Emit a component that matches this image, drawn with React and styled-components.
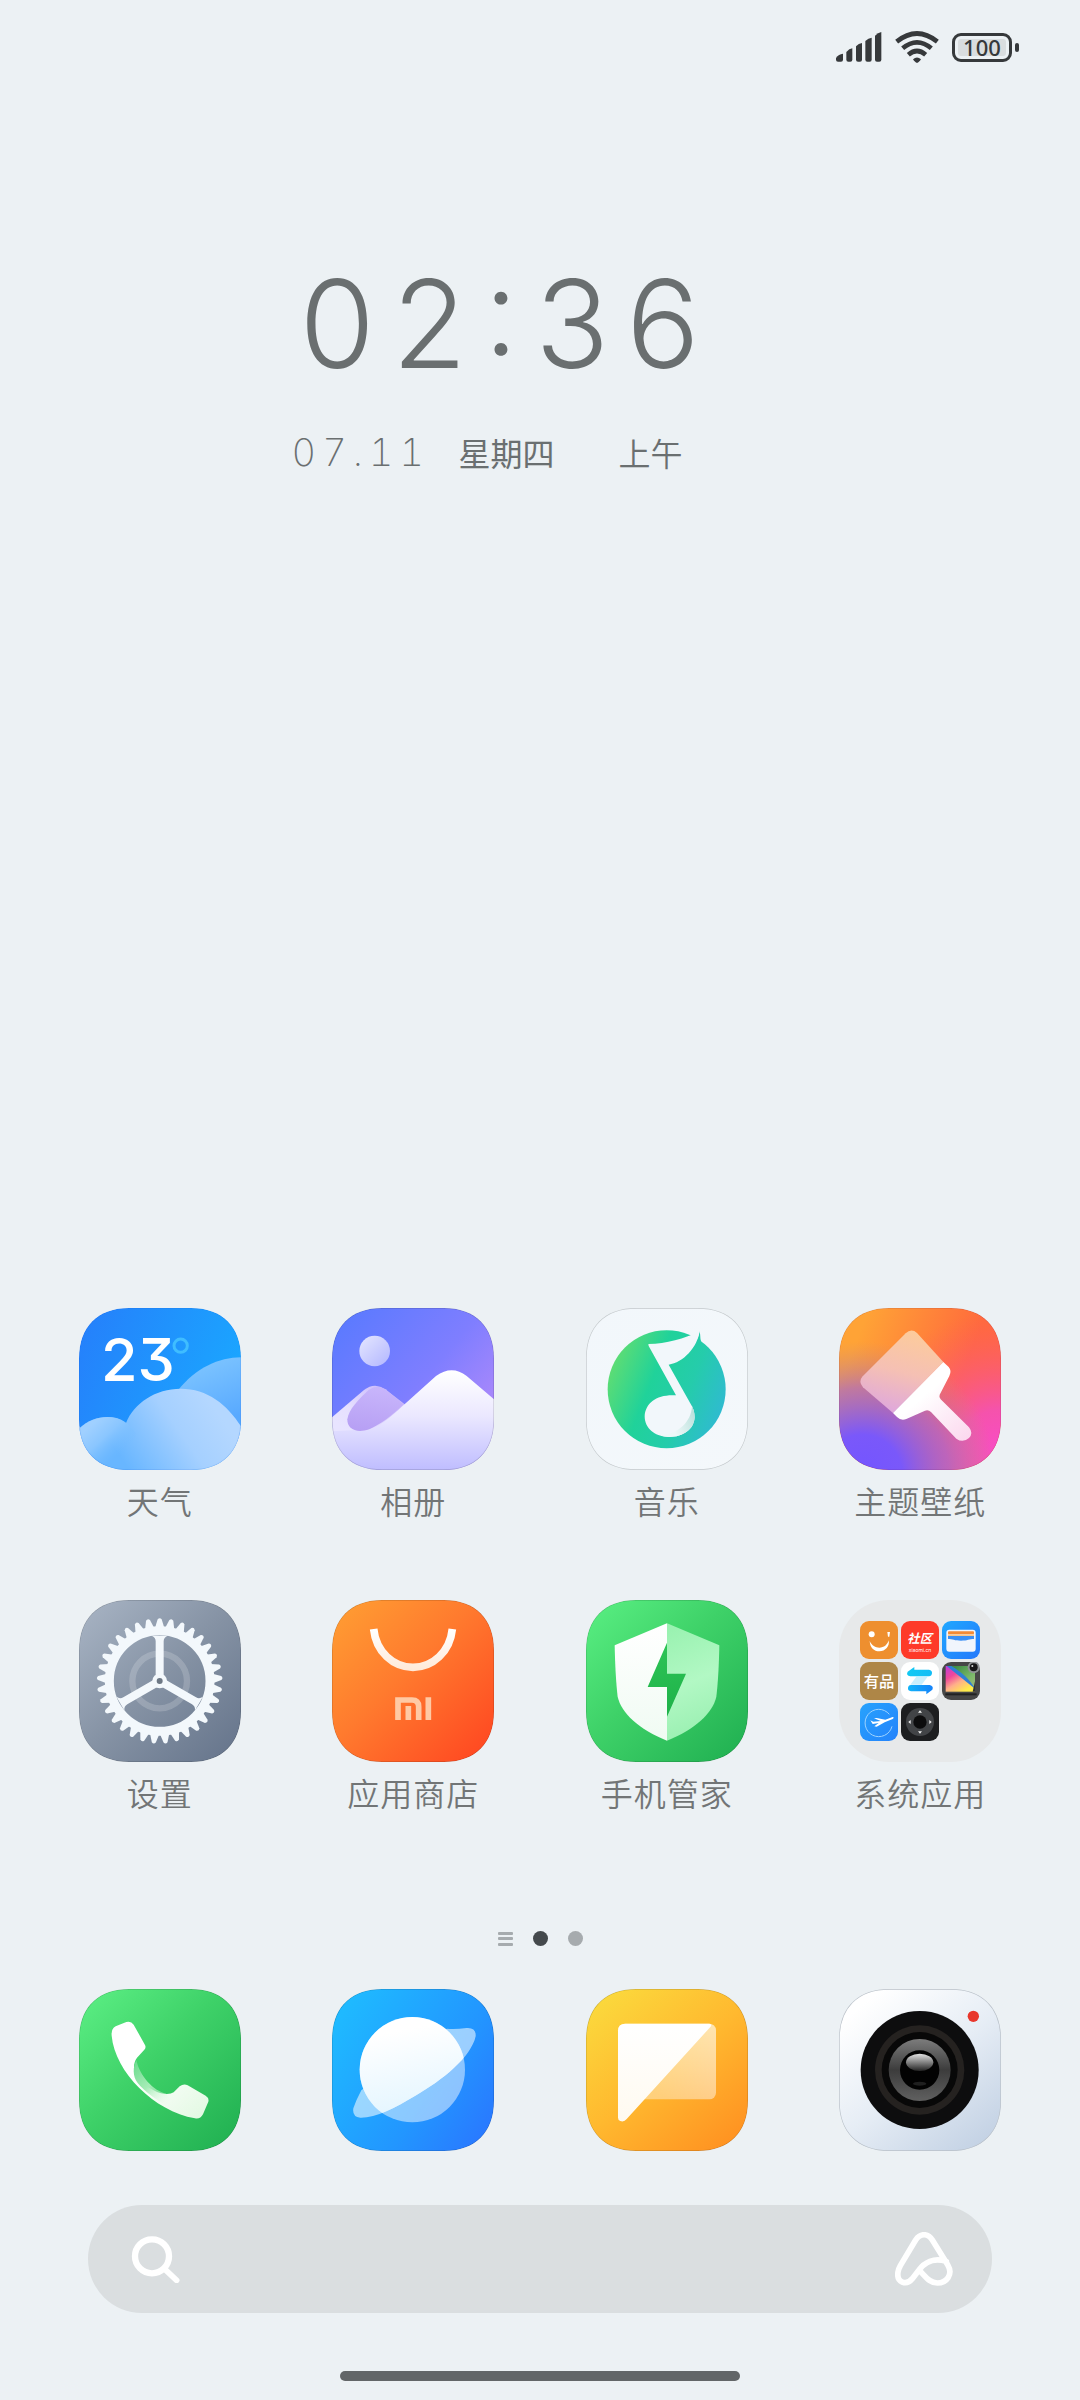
import styled, { createGlobalStyle } from 'styled-components'

const GlobalStyle = createGlobalStyle`
  * {
    box-sizing: border-box;
  }

  body {
    margin: 0;
    background: #ecf1f4;
    font-family: 'Inter', 'Noto Sans CJK SC', sans-serif;
  }

  button {
    padding: 0;
    border: 0;
    background: none;
    font: inherit;
    color: inherit;
    cursor: pointer;
  }

  svg {
    display: block;
  }
`

const Screen = styled.main`
  min-height: 100vh;
  display: flex;
  flex-direction: column;
  background: #ecf1f4;
`

const StatusBar = styled.header`
  display: flex;
  align-items: center;
  justify-content: flex-end;
  height: 94px;
  padding: 0 61px 0 0;
  gap: 13px;
  color: #36393b;
`

const Battery = styled.div`
  display: flex;
  align-items: center;
  gap: 3px;

  &::after {
    content: '';
    width: 4px;
    height: 9px;
    border-radius: 2px;
    background: #36393b;
  }
`

const BatteryBody = styled.div`
  width: 60px;
  height: 29px;
  padding: 3px;
  border: 3px solid #36393b;
  border-radius: 9px;
`

const BatteryLevel = styled.div`
  height: 17px;
  border-radius: 3px;
  background: #d9dddf;
  color: #36393b;
  font-family: 'Noto Sans', sans-serif;
  font-size: 22px;
  font-weight: 500;
  line-height: 17px;
  text-align: center;
`

const ClockWidget = styled.section`
  display: flex;
  flex-direction: column;
  gap: 44px;
  margin-top: 170px;
  padding-left: 27%;
  color: #6a6f70;
`

const Time = styled.time`
  padding-left: 8px;
  font-size: 122px;
  font-weight: 300;
  font-feature-settings: 'case';
  line-height: 120px;
  letter-spacing: 17px;
`

const DateLine = styled.div`
  display: flex;
  align-items: center;
  height: 48px;
  font-size: 32px;
  line-height: 48px;
`

const Day = styled.time`
  width: 167px;
  font-size: 38px;
  font-weight: 200;
  font-variant-numeric: tabular-nums;
  letter-spacing: 6px;
`

const Weekday = styled.span`
  width: 160px;
  font-family: 'Noto Sans CJK SC', sans-serif;
`

const Period = styled.span`
  font-family: 'Noto Sans CJK SC', sans-serif;
  font-weight: 350;
`

const Grid = styled.nav`
  display: grid;
  grid-template-columns: repeat(4, 1fr);
  row-gap: 76px;
  padding: 0 33px;
  margin-top: ${({ $push }) => $push};
`

const App = styled.button`
  display: flex;
  flex-direction: column;
  align-items: center;
  gap: 6px;
`

const Label = styled.span`
  color: #727576;
  font-family: 'Noto Sans CJK SC', sans-serif;
  font-size: 32px;
  font-weight: 350;
  line-height: 48px;
  letter-spacing: 1px;
`

const Folder = styled.span`
  display: grid;
  grid-template-columns: repeat(3, 38px);
  grid-auto-rows: 38px;
  gap: 3px;
  width: 162px;
  height: 162px;
  padding: 21px;
  border-radius: 50px;
  background: #e7e9ea;
`

const Pager = styled.div`
  display: flex;
  align-items: center;
  justify-content: center;
  gap: 20px;
  margin: 115px 0 43px;
`

const Dot = styled.button`
  width: 15px;
  height: 15px;
  border-radius: 50%;
  background: ${({ $active }) => ($active ? '#44494c' : '#a6abae')};
`

const FeedMark = styled.button`
  display: flex;
  flex-direction: column;
  justify-content: space-between;
  width: 15px;
  height: 14px;

  span {
    height: 3px;
    border-radius: 1px;
    background: #a6abae;
  }
`

const SearchBar = styled.form`
  display: flex;
  align-items: center;
  height: 108px;
  margin: 54px 88px 0;
  padding: 0 39px 0 43px;
  border-radius: 54px;
  background: #dadee0;
`

const SearchInput = styled.input`
  flex: 1;
  min-width: 0;
  height: 60px;
  margin: 0 20px;
  border: 0;
  outline: 0;
  background: none;
  color: #44494c;
  font: 32px 'Noto Sans CJK SC', sans-serif;
`

const HomeBar = styled.div`
  width: 37%;
  height: 10px;
  margin: 58px auto 19px;
  border-radius: 5px;
  background: #626668;
`

const SQUIRCLE =
  'M150 0H336C430 0 486 56 486 150V336C486 430 430 486 336 486H150C56 486 0 430 0 336V150C0 56 56 0 150 0Z'

function Gradient({ id, from = [0, 0], to = [486, 486], stops }) {
  return (
    <linearGradient id={id} gradientUnits="userSpaceOnUse" x1={from[0]} y1={from[1]} x2={to[0]} y2={to[1]}>
      {stops.map(([color, offset, opacity = 1]) => (
        <stop key={offset} offset={offset} stopColor={color} stopOpacity={opacity} />
      ))}
    </linearGradient>
  )
}

function Tile({ id, stops, from, to, edge = 'rgba(0, 0, 0, 0.16)', children }) {
  return (
    <svg width="162" height="162" viewBox="0 0 486 486" aria-hidden="true">
      <defs>
        <Gradient id={`${id}-bg`} stops={stops} from={from} to={to} />
        <clipPath id={`${id}-clip`}>
          <path d={SQUIRCLE} />
        </clipPath>
      </defs>
      <g clipPath={`url(#${id}-clip)`}>
        <path d={SQUIRCLE} fill={`url(#${id}-bg)`} />
        {children}
        <path d={SQUIRCLE} fill="none" stroke={edge} strokeWidth="4" />
      </g>
    </svg>
  )
}

function WeatherIcon() {
  return (
    <Tile id="weather" from={[0, 60]} to={[486, 260]} stops={[['#2580fb', 0], ['#1aa8ff', 1]]} edge="rgba(0, 60, 200, 0.12)">
      <Gradient id="weather-back" from={[360, 150]} to={[440, 340]} stops={[['#7fc6ff', 0], ['#58a9ff', 1]]} />
      <Gradient id="weather-mid" from={[400, 290]} to={[140, 470]} stops={[['#b4d7ff', 0], ['#a5d0ff', 0.4], ['#68b6ff', 1]]} />
      <Gradient id="weather-left" from={[60, 330]} to={[150, 430]} stops={[['#a0d0ff', 0], ['#8ac6ff', 0.4], ['#72bbff', 0.9, 0]]} />
      <path d="M296 248C350 180 420 148 486 148V400H296Z" fill="url(#weather-back)" />
      <path d="M0 486V362C28 337 55 327 85 327C108 327 126 334 141 345C165 285 230 242 305 242C385 242 445 290 486 355V486Z" fill="url(#weather-mid)" />
      <path d="M0 362C28 337 55 327 85 327C125 327 150 345 172 378V486H0Z" fill="url(#weather-left)" />
      <text x="66" y="220" fill="#fff" fontFamily="Inter, sans-serif" fontSize="178" fontWeight="450" style={{ fontFeatureSettings: "'cv09'" }}>
        23
      </text>
      <circle cx="305" cy="113" r="20" fill="none" stroke="#3fbdff" strokeWidth="9" />
    </Tile>
  )
}

function GalleryIcon() {
  return (
    <Tile id="gallery" from={[60, 0]} to={[440, 330]} stops={[['#5b7aff', 0], ['#7f7eff', 0.6], ['#a988fb', 1]]}>
      <Gradient id="gallery-sun" from={[90, 90]} to={[170, 175]} stops={[['#e1e3ff', 0], ['#b3b7ff', 1]]} />
      <Gradient id="gallery-snow" from={[0, 190]} to={[0, 486]} stops={[['#ffffff', 0], ['#ebe8ff', 0.45], ['#bfbdff', 1]]} />
      <Gradient id="gallery-hill" from={[160, 230]} to={[30, 360]} stops={[['#c9b8fb', 0], ['#e6e0ff', 0.7], ['#e8e4ff', 1]]} />
      <Gradient id="gallery-shade" from={[140, 240]} to={[120, 370]} stops={[['#c8b5fb', 0], ['#b7a0f4', 1]]} />
      <path d="M0 328L96 246Q128 221 160 244L220 290L130 486H0Z" fill="url(#gallery-hill)" />
      <circle cx="128" cy="129" r="46" fill="url(#gallery-sun)" />
      <path d="M0 370L70 366C120 380 170 332 216 290L312 204Q360 170 404 204L486 274V486H0Z" fill="url(#gallery-snow)" />
      <path d="M110 246Q136 228 160 244L214 289C180 324 140 352 112 364C72 378 45 362 46 334C50 304 80 274 110 246Z" fill="url(#gallery-shade)" />
    </Tile>
  )
}

function MusicIcon() {
  return (
    <Tile id="music" stops={[['#f2f7fb', 0], ['#f4f8fb', 1]]} edge="#c3c8cb">
      <Gradient id="music-disc" from={[70, 180]} to={[420, 320]} stops={[['#5fdd73', 0], ['#20d29a', 0.35], ['#25ccab', 0.65], ['#30b9d4', 1]]} />
      <Gradient id="music-shade" from={[262, 360]} to={[335, 330]} stops={[['#eef8f8', 0], ['#b9e0dc', 1]]} />
      <circle cx="242" cy="244" r="177" fill="url(#music-disc)" />
      <path d="M341 70C344 86 342 92 346 101L318 124C330 104 337 88 341 70Z" fill="#23cda8" />
      <path
        d="M188 108C240 108 296 92 341 70C334 118 292 164 248 170L312 284C322 300 326 312 326 328C324 364 292 387 250 387C206 387 176 360 176 325C178 284 214 258 270 262L188 114Q186 108 188 108Z"
        fill="#f2f7fb"
      />
      <path d="M318 294C324 306 326 316 326 328C324 364 292 387 250 387C240 387 232 385 224 382C276 378 316 342 318 294Z" fill="url(#music-shade)" />
    </Tile>
  )
}

function ThemeIcon() {
  return (
    <Tile id="theme" from={[90, 0]} to={[400, 120]} stops={[['#ffa336', 0], ['#ff6a3c', 1]]} edge="rgba(90, 0, 60, 0.14)">
      <radialGradient id="theme-pink" gradientUnits="userSpaceOnUse" cx="486" cy="430" r="420">
        <stop offset="0" stopColor="#f94cc8" />
        <stop offset="0.3" stopColor="#f450b8" stopOpacity="0.9" />
        <stop offset="1" stopColor="#ff5a60" stopOpacity="0" />
      </radialGradient>
      <radialGradient id="theme-violet" gradientUnits="userSpaceOnUse" cx="70" cy="500" r="400">
        <stop offset="0" stopColor="#7355ff" />
        <stop offset="0.3" stopColor="#7a58fa" />
        <stop offset="0.65" stopColor="#a56acb" stopOpacity="0.7" />
        <stop offset="1" stopColor="#c98a80" stopOpacity="0" />
      </radialGradient>
      <Gradient id="theme-head" from={[210, 70]} to={[150, 310]} stops={[['#fccb9c', 0], ['#f5c0b4', 0.5], ['#dfa8dc', 1]]} />
      <Gradient id="theme-handle" from={[270, 250]} to={[390, 390]} stops={[['#ffffff', 0], ['#fbd8ee', 1]]} />
      <path d={SQUIRCLE} fill="url(#theme-pink)" />
      <path d={SQUIRCLE} fill="url(#theme-violet)" />
      <path d="M162 315L72 238Q57 221 71 205L200 76Q217 60 234 75L313 162Z" fill="url(#theme-head)" />
      <path
        d="M162 315L313 162L329 177Q339 188 331 204L302 260Q299 268 305 274L390 358Q404 376 390 390Q372 406 352 392L276 312Q268 304 258 308L202 333Q186 339 174 327Z"
        fill="url(#theme-handle)"
      />
    </Tile>
  )
}

const TEETH = Array.from({ length: 33 }, (_, i) => (i * 360) / 33)
const SPOKES = [0, 120, 240]

function SettingsIcon() {
  return (
    <Tile id="settings" stops={[['#a9b5c5', 0], ['#8592a4', 0.5], ['#64738a', 1]]}>
      <circle cx="242" cy="243" r="82" fill="none" stroke="#fff" strokeOpacity="0.18" strokeWidth="19" />
      <g fill="#f3f8fc">
        {TEETH.map((angle) => (
          <path key={angle} d="M228 84L236 58Q242 51 248 58L256 84Z" transform={`rotate(${angle} 242 243)`} />
        ))}
        {SPOKES.map((angle) => (
          <path key={angle} d="M230 243V124Q230 112 218 107H266Q254 112 254 124V243Z" transform={`rotate(${angle} 242 243)`} />
        ))}
      </g>
      <circle cx="242" cy="243" r="151" fill="none" stroke="#f3f8fc" strokeWidth="27" />
      <circle cx="242" cy="243" r="22" fill="#f3f8fc" />
      <circle cx="242" cy="243" r="9" fill="#6d7885" />
    </Tile>
  )
}

function StoreIcon() {
  return (
    <Tile id="store" stops={[['#ffa033', 0], ['#ff7a2e', 0.45], ['#ff4320', 1]]}>
      <Gradient id="store-handle" from={[0, 88]} to={[0, 212]} stops={[['#ffffff', 0], ['#ffe9d8', 1]]} />
      <path d="M125 87C132 156 184 202 243 202C302 202 354 156 361 87" fill="none" stroke="url(#store-handle)" strokeWidth="23" />
      <g fill="none" stroke="#ffc9a4" strokeWidth="17">
        <path d="M198 360V300H240Q260 300 260 320V360" />
        <path d="M229 318V360" />
        <path d="M289 292V360" />
      </g>
    </Tile>
  )
}

function SecurityIcon() {
  return (
    <Tile id="security" stops={[['#5af083', 0], ['#3ed168', 0.45], ['#1fae50', 1]]}>
      <Gradient id="security-bolt" from={[220, 150]} to={[260, 340]} stops={[['#2cc355', 0], ['#1fb24a', 1]]} />
      <Gradient id="security-right" from={[250, 90]} to={[380, 400]} stops={[['#9af2b1', 0], ['#b2f8c4', 0.5], ['#98efb0', 1]]} />
      <Gradient id="security-left" from={[0, 80]} to={[0, 420]} stops={[['#ffffff', 0], ['#f0fbf3', 1]]} />
      <path d="M243 70L86 136C87 190 90 250 95 290C106 340 160 388 243 422Z" fill="url(#security-left)" />
      <path d="M243 70L400 136C399 190 396 250 391 290C380 340 326 388 243 422Z" fill="url(#security-right)" />
      <path d="M243 128L185 261H243V350L300 221H243Z" fill="url(#security-bolt)" />
    </Tile>
  )
}

function PhoneIcon() {
  return (
    <Tile id="phone" stops={[['#5df085', 0], ['#3ed168', 0.45], ['#1fae50', 1]]}>
      <Gradient id="phone-body" from={[130, 120]} to={[370, 370]} stops={[['#ffffff', 0], ['#ffffff', 0.4], ['#e4f9e4', 1]]} />
      <Gradient id="phone-shade" from={[165, 225]} to={[270, 340]} stops={[['#6fdc90', 0], ['#a5ecb6', 0.5], ['#e9faea', 1, 0]]} />
      <path
        d="M98 140Q96 120 110 112L142 99Q156 95 164 107L198 168Q202 176 196 182L174 206Q162 222 166 246C180 278 216 304 246 313Q272 318 284 310L302 292Q314 283 326 289L380 320Q391 327 388 338L372 376Q364 391 348 388C226 366 108 250 98 140Z"
        fill="url(#phone-body)"
      />
      <path d="M172 214C182 260 222 306 262 314L290 362C236 340 196 306 176 282C160 262 162 232 172 214Z" fill="url(#phone-shade)" />
    </Tile>
  )
}

function BrowserIcon() {
  return (
    <Tile id="browser" from={[0, 120]} to={[486, 440]} stops={[['#1fb9ff', 0], ['#2296ff', 0.6], ['#2a76ff', 1]]}>
      <Gradient id="browser-planet" from={[180, 130]} to={[230, 380]} stops={[['#ffffff', 0], ['#e3f5ff', 1]]} />
      <clipPath id="browser-above">
        <path d="M0 0H486L431 142C418 204 330 275 250 320C190 356 130 387 85 386L0 420Z" />
      </clipPath>
      <circle cx="241" cy="242" r="158" fill="#fff" fillOpacity="0.48" />
      <path
        d="M345 119Q370 121 404 117Q433 115 431 142C418 204 330 275 250 320C190 356 130 387 85 386Q60 384 64 358Q72 334 88 304Z"
        fill="#fff"
        fillOpacity="0.55"
      />
      <circle cx="241" cy="242" r="158" fill="url(#browser-planet)" clipPath="url(#browser-above)" />
    </Tile>
  )
}

function NotesIcon() {
  return (
    <Tile id="notes" from={[60, 20]} to={[420, 460]} stops={[['#fbd83c', 0], ['#ffb92f', 0.5], ['#ff9422', 1]]}>
      <Gradient id="notes-sheet" from={[390, 110]} to={[240, 330]} stops={[['#ffffff', 0, 0.62], ['#ffffff', 1, 0.38]]} />
      <Gradient id="notes-fold" from={[0, 104]} to={[0, 392]} stops={[['#ffffff', 0], ['#fffaf0', 1]]} />
      <rect x="96" y="104" width="294" height="227" rx="20" fill="url(#notes-sheet)" />
      <path d="M96 126Q96 104 118 104H370Q380 105 373 114L122 390Q114 400 103 396Q96 394 96 386Z" fill="url(#notes-fold)" />
    </Tile>
  )
}

function CameraIcon() {
  return (
    <Tile id="camera" from={[80, 40]} to={[420, 460]} stops={[['#ffffff', 0], ['#e6edf5', 0.5], ['#c5d3e5', 1]]} edge="#b9c0c8">
      <Gradient id="camera-iris" from={[0, 150]} to={[0, 336]} stops={[['#7c7c7c', 0], ['#3c3c3c', 0.5], ['#606060', 1]]} />
      <Gradient id="camera-glint" from={[0, 194]} to={[0, 244]} stops={[['#e2e2e2', 0], ['#2a2a2a', 1]]} />
      <circle cx="242" cy="243" r="177" fill="#0d0d0e" />
      <circle cx="242" cy="243" r="134" fill="#252220" />
      <circle cx="242" cy="243" r="114" fill="#080808" />
      <circle cx="242" cy="243" r="93" fill="url(#camera-iris)" />
      <circle cx="242" cy="243" r="59" fill="#020202" />
      <ellipse cx="242" cy="220" rx="41" ry="26" fill="url(#camera-glint)" />
      <ellipse cx="242" cy="284" rx="20" ry="6" fill="#1f1f1f" />
      <circle cx="403" cy="82" r="17" fill="#e8372c" />
    </Tile>
  )
}

function MiniTile({ fill, children }) {
  return (
    <svg width="38" height="38" viewBox="0 0 114 114" aria-hidden="true">
      <rect width="114" height="114" rx="27" fill={fill} />
      {children}
    </svg>
  )
}

function SystemFolder() {
  return (
    <Folder>
      <MiniTile fill="#ee8f2f">
        <circle cx="35" cy="40" r="9" fill="#fff" />
        <path d="M82 33H90L88 47H84Z" fill="#fff" />
        <path d="M29 60C36 74 46 80 58 80C72 80 82 72 86 58C90 76 76 91 58 91C42 91 30 80 29 60Z" fill="#fff" />
      </MiniTile>
      <MiniTile fill="#fe3a29">
        <text x="56" y="66" textAnchor="middle" fill="#fff" fontFamily="'Noto Sans CJK SC', sans-serif" fontSize="37" fontWeight="700" fontStyle="italic">
          社区
        </text>
        <text x="57" y="92" textAnchor="middle" fill="#fff" fontFamily="Inter, sans-serif" fontSize="15">
          xiaomi.cn
        </text>
      </MiniTile>
      <MiniTile fill="url(#wallet-bg)">
        <Gradient id="wallet-bg" from={[0, 0]} to={[114, 114]} stops={[['#20a8ff', 0], ['#2478fb', 1]]} />
        <rect x="13" y="26" width="88" height="66" rx="9" fill="#f1f5fc" />
        <rect x="18" y="31" width="78" height="9" rx="3" fill="#f58a35" />
        <rect x="18" y="40" width="78" height="5" fill="#f9c58a" />
        <path d="M18 45H96V54C82 54 76 59 57 59C38 59 32 54 18 54Z" fill="#3b8ff5" />
      </MiniTile>
      <MiniTile fill="#ae8647">
        <text x="57" y="74" textAnchor="middle" fill="#fff" fontFamily="'Noto Sans CJK SC', sans-serif" fontSize="46" fontWeight="500">
          有品
        </text>
      </MiniTile>
      <MiniTile fill="#fff">
        <Gradient id="share-up" from={[20, 30]} to={[94, 30]} stops={[['#12c9f3', 0], ['#13bdf6', 1]]} />
        <Gradient id="share-down" from={[20, 80]} to={[94, 80]} stops={[['#12b5f8', 0], ['#1483fa', 1]]} />
        <path d="M46 44H80L62 68H28Z" fill="#c9effd" />
        <path d="M20 29L40 15V23H84Q94 25 93 34Q92 43 84 43H28Q14 40 20 29Z" fill="url(#share-up)" />
        <path d="M94 83L76 97V88H30Q20 86 21 78Q22 69 30 69H86Q99 72 94 83Z" fill="url(#share-down)" />
      </MiniTile>
      <MiniTile fill="#474747">
        <Gradient id="photo-hue" from={[14, 14]} to={[60, 92]} stops={[['#c23bd8', 0], ['#f0489a', 0.35], ['#ffb08a', 0.65], ['#ffec4a', 1]]} />
        <Gradient id="photo-leaf" from={[40, 14]} to={[100, 80]} stops={[['#3f8e46', 0], ['#7cb96a', 0.6], ['#a6ba7c', 1]]} />
        <rect x="11" y="12" width="88" height="77" fill="url(#photo-hue)" />
        <path d="M14 12L99 12V80Z" fill="#2f7fd6" />
        <path d="M28 12H99V80C84 52 58 30 28 12Z" fill="url(#photo-leaf)" />
        <path d="M99 58V89H92Z" fill="#333" />
        <path d="M10 97H104" stroke="#222" strokeWidth="6" />
        <circle cx="95" cy="16" r="18" fill="#8f9294" />
        <circle cx="95" cy="16" r="12" fill="#161616" />
        <circle cx="91" cy="12" r="3" fill="#ddd" />
      </MiniTile>
      <MiniTile fill="url(#travel-bg)">
        <Gradient id="travel-bg" from={[0, 0]} to={[114, 114]} stops={[['#27a3fd', 0], ['#2482fb', 1]]} />
        <path d="M88 34A41 41 0 1 0 96 70" fill="none" stroke="#9ed3ff" strokeWidth="3" />
        <path d="M31 52L40 56L62 54L42 46L50 45L76 50L98 42Q104 43 98 48L74 58L50 71L43 70L56 60L38 63Z" fill="#fff" />
      </MiniTile>
      <MiniTile fill="#1d1e20">
        <circle cx="57" cy="57" r="42" fill="#424447" />
        <circle cx="57" cy="57" r="20" fill="#0c0c0d" />
        <g fill="#f0f0f0">
          <path d="M57 22L63 29H51Z" />
          <path d="M57 92L63 85H51Z" />
          <path d="M22 57L29 51V63Z" />
          <path d="M92 57L85 51V63Z" />
        </g>
      </MiniTile>
    </Folder>
  )
}

function SignalIcon() {
  return (
    <svg width="46" height="30" viewBox="0 0 138 90" fill="currentColor" aria-label="信号">
      <path d="M0 78Q8 66 21 65V83Q21 89 15 89H6Q0 89 0 83Z" />
      <path d="M31 60Q40 50 49 49V83Q49 89 43 89H37Q31 89 31 83Z" />
      <path d="M60 43Q68 34 78 33V83Q78 89 72 89H66Q60 89 60 83Z" />
      <path d="M88 27Q97 18 107 17V83Q107 89 101 89H94Q88 89 88 83Z" />
      <path d="M117 11Q126 2 136 0V83Q136 89 130 89H123Q117 89 117 83Z" />
    </svg>
  )
}

function WifiIcon() {
  return (
    <svg width="44" height="32" viewBox="0 0 132 96" fill="none" stroke="currentColor" strokeWidth="14" aria-label="无线网络">
      <path d="M5 32Q66 -17 127 32" />
      <path d="M23 52Q66 16 109 52" />
      <path d="M40 71Q66 49 92 71" />
      <path d="M54 85Q66 74 78 85Q76 90 70 94Q66 97 62 94Q56 90 54 85Z" fill="currentColor" stroke="none" />
    </svg>
  )
}

function SearchIcon() {
  return (
    <svg width="49" height="48" viewBox="0 0 147 144" fill="none" stroke="#fff" strokeWidth="19" strokeLinecap="round" aria-hidden="true">
      <circle cx="63" cy="64" r="51" />
      <path d="M102 103L137 136" strokeWidth="17" />
    </svg>
  )
}

function AssistantIcon() {
  return (
    <svg width="58" height="54" viewBox="0 0 174 162" fill="none" stroke="#fff" strokeWidth="17" strokeLinecap="round" aria-hidden="true">
      <path d="M154 88C116 76 88 92 72 114L52 140C34 162 4 152 9 120Q11 110 16 101L62 24C76 3 99 3 112 24L158 98C176 128 154 153 127 153C104 153 92 134 75 117" />
    </svg>
  )
}

const apps = [
  { name: '天气', icon: <WeatherIcon /> },
  { name: '相册', icon: <GalleryIcon /> },
  { name: '音乐', icon: <MusicIcon /> },
  { name: '主题壁纸', icon: <ThemeIcon /> },
  { name: '设置', icon: <SettingsIcon /> },
  { name: '应用商店', icon: <StoreIcon /> },
  { name: '手机管家', icon: <SecurityIcon /> },
  { name: '系统应用', icon: <SystemFolder /> },
]

const dock = [
  { name: '电话', icon: <PhoneIcon /> },
  { name: '浏览器', icon: <BrowserIcon /> },
  { name: '便签', icon: <NotesIcon /> },
  { name: '相机', icon: <CameraIcon /> },
]

export default function HomeScreen() {
  return (
    <Screen>
      <GlobalStyle />
      <StatusBar>
        <SignalIcon />
        <WifiIcon />
        <Battery>
          <BatteryBody>
            <BatteryLevel>100</BatteryLevel>
          </BatteryBody>
        </Battery>
      </StatusBar>

      <ClockWidget>
        <Time>02:36</Time>
        <DateLine>
          <Day>07.11</Day>
          <Weekday>星期四</Weekday>
          <Period>上午</Period>
        </DateLine>
      </ClockWidget>

      <Grid $push="auto" aria-label="应用">
        {apps.map(({ name, icon }) => (
          <App key={name} type="button">
            {icon}
            <Label>{name}</Label>
          </App>
        ))}
      </Grid>

      <Pager>
        <FeedMark type="button" aria-label="负一屏">
          <span />
          <span />
          <span />
        </FeedMark>
        <Dot type="button" $active aria-label="第一页" />
        <Dot type="button" aria-label="第二页" />
      </Pager>

      <Grid $push="0" aria-label="快捷栏">
        {dock.map(({ name, icon }) => (
          <App key={name} type="button" aria-label={name}>
            {icon}
          </App>
        ))}
      </Grid>

      <SearchBar role="search" onSubmit={(e) => e.preventDefault()}>
        <button type="submit" aria-label="搜索">
          <SearchIcon />
        </button>
        <SearchInput type="text" aria-label="搜索内容" />
        <button type="button" aria-label="语音助手">
          <AssistantIcon />
        </button>
      </SearchBar>

      <HomeBar />
    </Screen>
  )
}
